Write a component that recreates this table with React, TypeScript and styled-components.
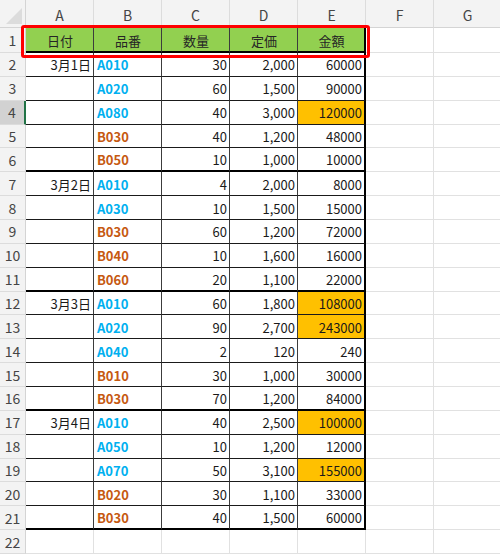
import React from "react";
import styled, { createGlobalStyle, css } from "styled-components";

const GlobalStyle = createGlobalStyle`
  html, body { margin: 0; padding: 0; background: #ffffff; overflow: hidden; }
  body { font-family: "Noto Sans CJK JP", "Noto Sans", sans-serif; }
`;

const COLS = ["A", "B", "C", "D", "E", "F", "G"];

type Row = {
  date: string;
  code: string;
  qty: string;
  price: string;
  amount: string;
  hl?: boolean;
  groupEnd?: boolean;
};

const rows: Row[] = [
  { date: "3月1日", code: "A010", qty: "30", price: "2,000", amount: "60000" },
  { date: "", code: "A020", qty: "60", price: "1,500", amount: "90000" },
  { date: "", code: "A080", qty: "40", price: "3,000", amount: "120000", hl: true },
  { date: "", code: "B030", qty: "40", price: "1,200", amount: "48000" },
  { date: "", code: "B050", qty: "10", price: "1,000", amount: "10000", groupEnd: true },
  { date: "3月2日", code: "A010", qty: "4", price: "2,000", amount: "8000" },
  { date: "", code: "A030", qty: "10", price: "1,500", amount: "15000" },
  { date: "", code: "B030", qty: "60", price: "1,200", amount: "72000" },
  { date: "", code: "B040", qty: "10", price: "1,600", amount: "16000" },
  { date: "", code: "B060", qty: "20", price: "1,100", amount: "22000", groupEnd: true },
  { date: "3月3日", code: "A010", qty: "60", price: "1,800", amount: "108000", hl: true },
  { date: "", code: "A020", qty: "90", price: "2,700", amount: "243000", hl: true },
  { date: "", code: "A040", qty: "2", price: "120", amount: "240" },
  { date: "", code: "B010", qty: "30", price: "1,000", amount: "30000" },
  { date: "", code: "B030", qty: "70", price: "1,200", amount: "84000", groupEnd: true },
  { date: "3月4日", code: "A010", qty: "40", price: "2,500", amount: "100000", hl: true },
  { date: "", code: "A050", qty: "10", price: "1,200", amount: "12000" },
  { date: "", code: "A070", qty: "50", price: "3,100", amount: "155000", hl: true },
  { date: "", code: "B020", qty: "30", price: "1,100", amount: "33000" },
  { date: "", code: "B030", qty: "40", price: "1,500", amount: "60000", groupEnd: true },
];

const headers = ["日付", "品番", "数量", "定価", "金額"];

const Sheet = styled.div`
  position: relative;
  display: grid;
  grid-template-columns: 26px repeat(7, 68px);
  grid-template-rows: 28px 25px repeat(21, 23.86px);
  width: 500px;
  height: 554px;
  overflow: hidden;
  font-size: 13px;
  color: #1a1a1a;
`;

const Corner = styled.div`
  position: relative;
  background: #f3f3f3;
  border-right: 1px solid #d4d4d4;
  border-bottom: 1px solid #d4d4d4;
  box-sizing: border-box;
  &::after {
    content: "";
    position: absolute;
    right: 3px;
    bottom: 3px;
    width: 0;
    height: 0;
    border-left: 16px solid transparent;
    border-bottom: 16px solid #dcdcdc;
  }
`;

const ColHeader = styled.div`
  display: flex;
  align-items: center;
  justify-content: center;
  background: #f3f3f3;
  color: #454545;
  font-size: 14px;
  border-right: 1px solid #dcdcdc;
  border-bottom: 1px solid #d4d4d4;
  box-sizing: border-box;
  padding-top: 2px;
`;

const RowHeader = styled.div<{ $active?: boolean }>`
  display: flex;
  align-items: center;
  justify-content: center;
  background: ${(p) => (p.$active ? "#d2d2d2" : "#f3f3f3")};
  color: #454545;
  font-size: 14px;
  border-right: ${(p) => (p.$active ? "2px solid #217346" : "1px solid #d4d4d4")};
  border-bottom: 1px solid #dcdcdc;
  box-sizing: border-box;
`;

const Cell = styled.div<{
  $table?: boolean;
  $thickBottom?: boolean;
  $thickRight?: boolean;
  $align?: "left" | "right" | "center";
  $bg?: string;
  $color?: string;
  $bold?: boolean;
}>`
  display: flex;
  align-items: center;
  justify-content: ${(p) =>
    p.$align === "right" ? "flex-end" : p.$align === "center" ? "center" : "flex-start"};
  box-sizing: border-box;
  padding: 1px 2px 0 3px;
  white-space: nowrap;
  background: ${(p) => p.$bg || "#ffffff"};
  color: ${(p) => p.$color || "#1a1a1a"};
  font-weight: ${(p) => (p.$bold ? 700 : 400)};
  ${(p) =>
    p.$table
      ? css`
          border-right: ${p.$thickRight ? "2px solid #000" : "1px solid #3c3c3c"};
          border-bottom: ${p.$thickBottom ? "2px solid #000" : "1px solid #1a1a1a"};
        `
      : css`
          border-right: 1px solid #e1e1e1;
          border-bottom: 1px solid #e1e1e1;
        `}
`;

const Highlight = styled.div`
  position: absolute;
  left: 21px;
  top: 25px;
  width: 349px;
  height: 33px;
  box-sizing: border-box;
  border: 3px solid #ff0000;
  border-radius: 3px;
  pointer-events: none;
`;

const BLUE = "#00b0f0";
const ORANGE = "#c65911";

export default function App() {
  const cells: React.ReactNode[] = [];
  cells.push(<Corner key="corner" />);
  COLS.forEach((c) => cells.push(<ColHeader key={`h-${c}`}>{c}</ColHeader>));

  cells.push(<RowHeader key="r1">1</RowHeader>);
  headers.forEach((h, i) =>
    cells.push(
      <Cell
        key={`1-${i}`}
        $table
        $align="center"
        $bg="#92d050"
        $color="#262626"
        $thickBottom
        $thickRight={i === 4}
      >
        {h}
      </Cell>
    )
  );
  cells.push(<Cell key="1-F" />);
  cells.push(<Cell key="1-G" />);

  rows.forEach((r, idx) => {
    const n = idx + 2;
    const tb = !!r.groupEnd;
    cells.push(
      <RowHeader key={`r${n}`} $active={n === 4}>
        {n}
      </RowHeader>
    );
    cells.push(
      <Cell key={`${n}-A`} $table $align="right" $thickBottom={tb}>
        {r.date}
      </Cell>
    );
    cells.push(
      <Cell
        key={`${n}-B`}
        $table
        $align="left"
        $bold
        $color={r.code.startsWith("A") ? BLUE : ORANGE}
        $thickBottom={tb}
      >
        {r.code}
      </Cell>
    );
    cells.push(
      <Cell key={`${n}-C`} $table $align="right" $thickBottom={tb}>
        {r.qty}
      </Cell>
    );
    cells.push(
      <Cell key={`${n}-D`} $table $align="right" $thickBottom={tb}>
        {r.price}
      </Cell>
    );
    cells.push(
      <Cell
        key={`${n}-E`}
        $table
        $align="right"
        $thickBottom={tb}
        $thickRight
        $bg={r.hl ? "#ffc000" : undefined}
      >
        {r.amount}
      </Cell>
    );
    cells.push(<Cell key={`${n}-F`} />);
    cells.push(<Cell key={`${n}-G`} />);
  });

  cells.push(<RowHeader key="r22">22</RowHeader>);
  COLS.forEach((c) => cells.push(<Cell key={`22-${c}`} />));

  return (
    <>
      <GlobalStyle />
      <Sheet>
        {cells}
        <Highlight />
      </Sheet>
    </>
  );
}
